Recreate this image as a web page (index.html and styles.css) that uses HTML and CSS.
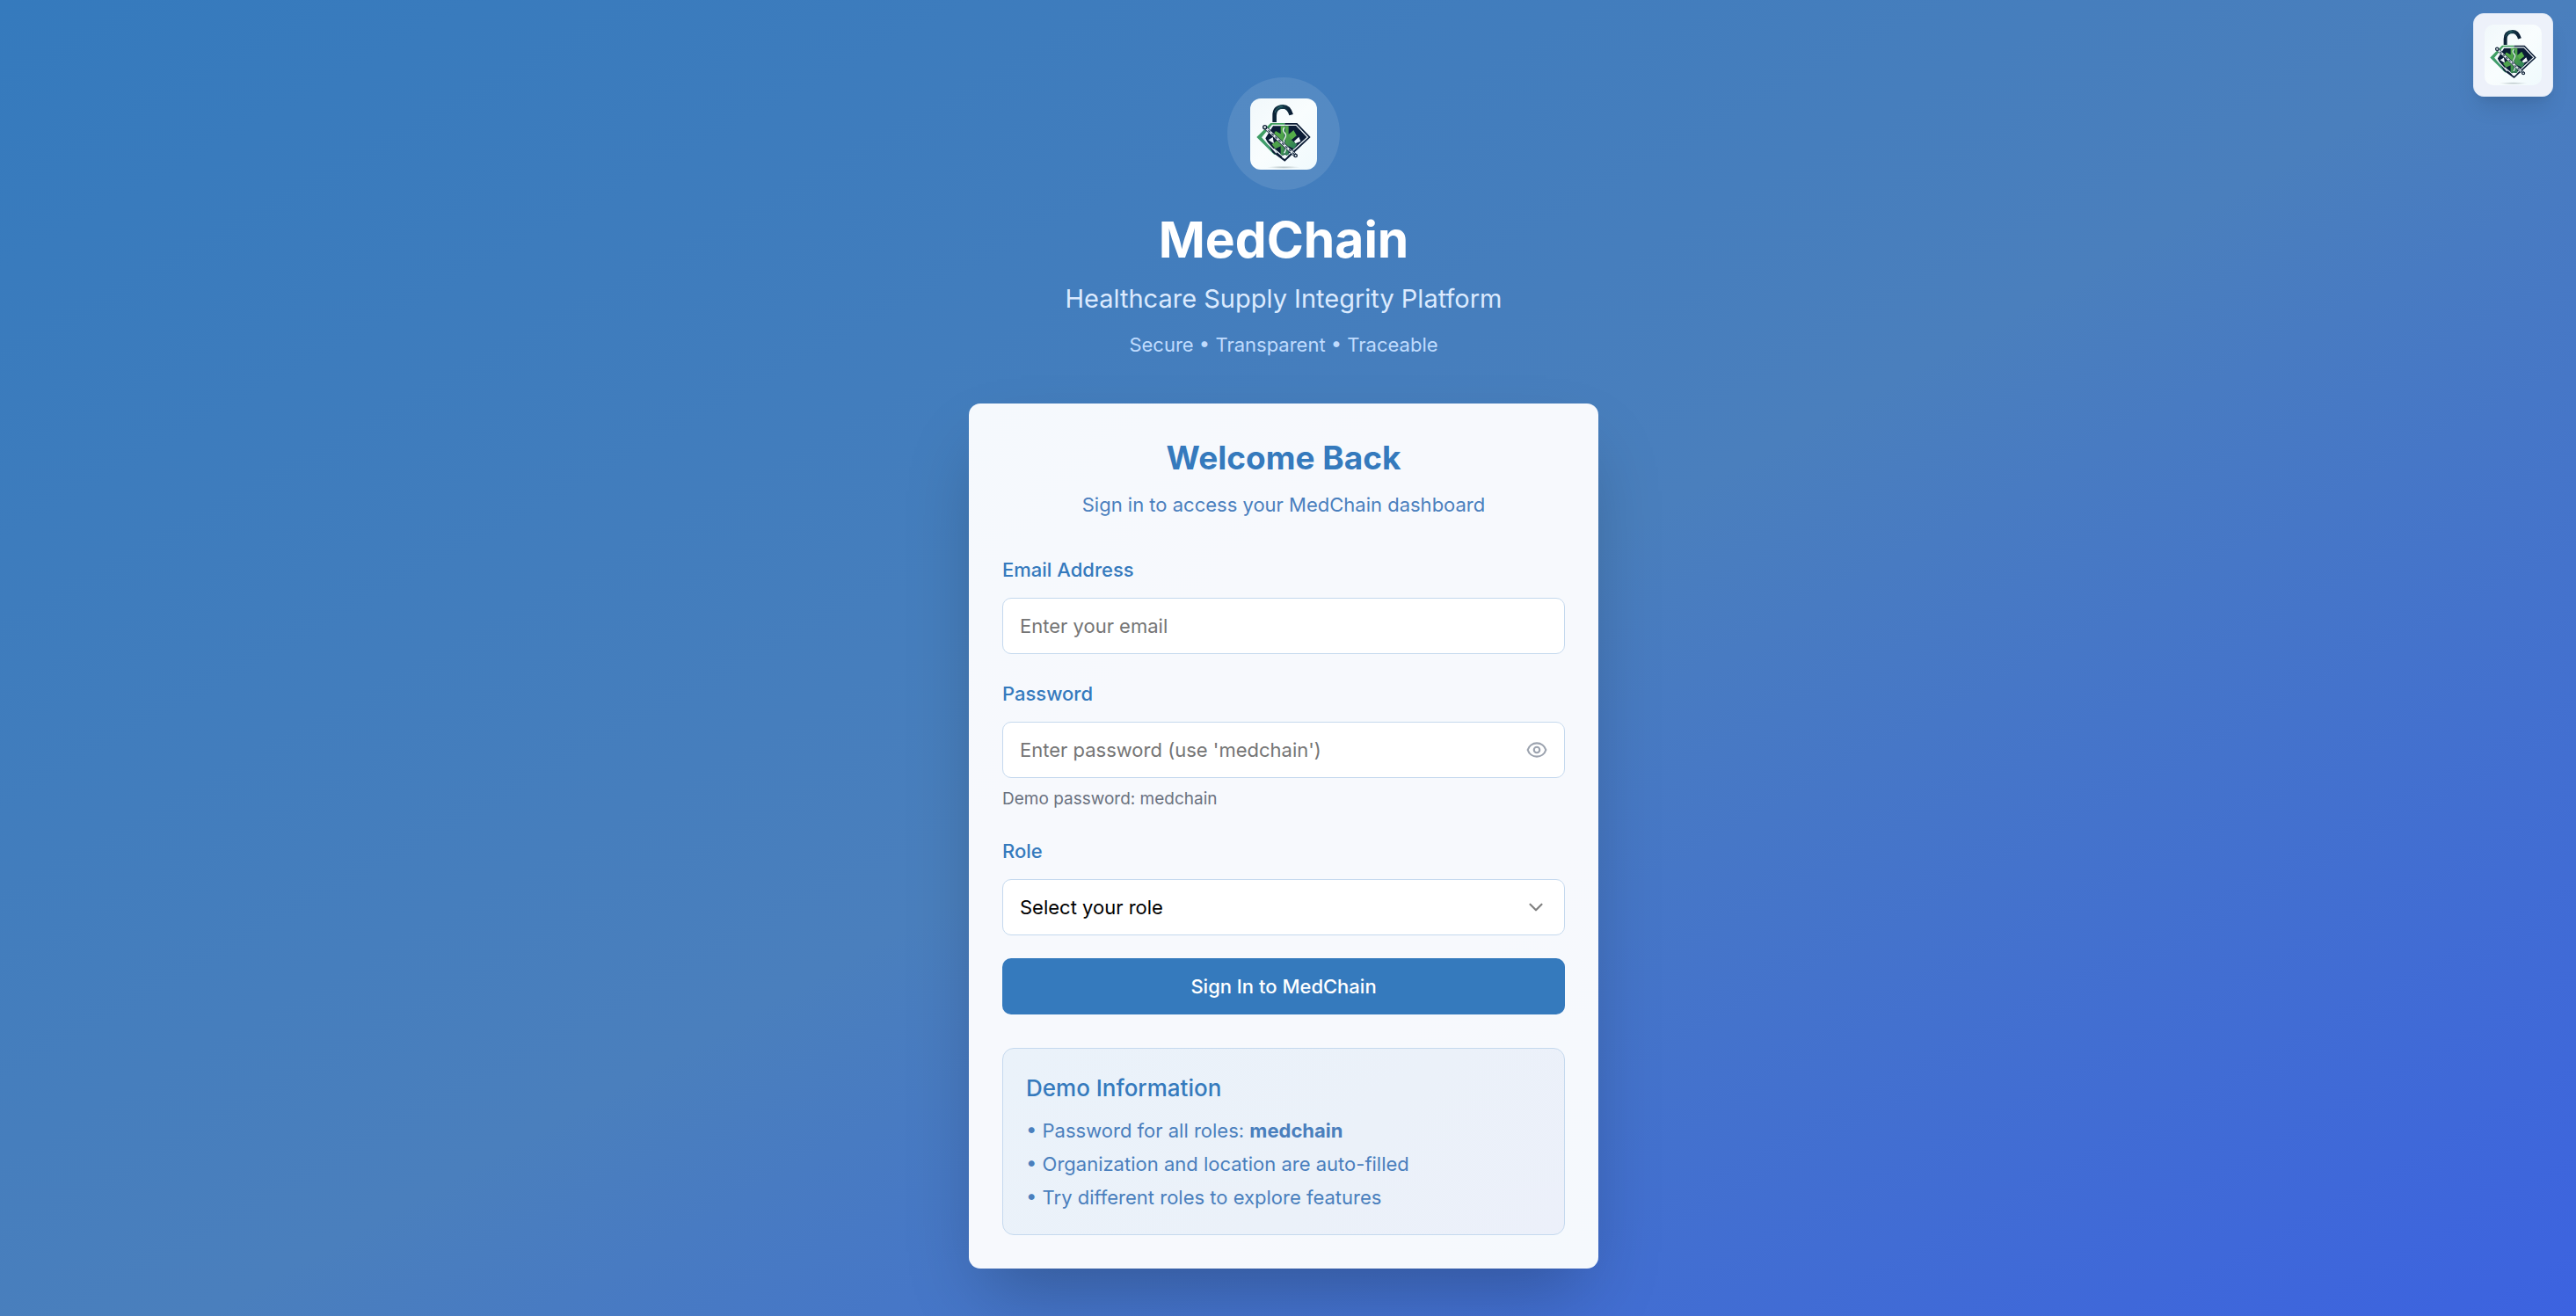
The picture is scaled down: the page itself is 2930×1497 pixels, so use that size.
FILE: index.html
```html
<!DOCTYPE html>
<html lang="en">
<head>
<meta charset="utf-8">
<meta name="viewport" content="width=device-width, initial-scale=1">
<title>MedChain</title>
<link rel="stylesheet" href="styles.css">
</head>
<body>
<svg class="defs" width="0" height="0" aria-hidden="true">
  <defs>
    <linearGradient id="tile" x1="0" y1="0" x2="1" y2="1"><stop offset="0" stop-color="#f1f8fb"/><stop offset=".5" stop-color="#f9fdfe"/><stop offset="1" stop-color="#f0fafd"/></linearGradient>
    <linearGradient id="shackle" x1="0" y1="0" x2="1" y2="0"><stop offset="0" stop-color="#0c2236"/><stop offset=".35" stop-color="#17424f"/><stop offset="1" stop-color="#0a1c33"/></linearGradient>
    <linearGradient id="leaf" x1="0" y1="0" x2="1" y2="1"><stop offset="0" stop-color="#5cb947"/><stop offset=".55" stop-color="#48994c"/><stop offset="1" stop-color="#1d6f60"/></linearGradient>
    <linearGradient id="edge" x1="0" y1="0" x2="0" y2="1"><stop offset="0" stop-color="#3f9f5c"/><stop offset="1" stop-color="#3f9a72"/></linearGradient>
    <radialGradient id="ground"><stop offset="0" stop-color="#b9c4c6"/><stop offset="1" stop-color="#b9c4c6" stop-opacity="0"/></radialGradient>
    <symbol id="logo" viewBox="0 0 228 243" preserveAspectRatio="none">
      <rect width="228" height="243" fill="url(#tile)"/>
      <ellipse cx="114" cy="235" rx="56" ry="5" fill="url(#ground)"/>
      <path d="M83 81V58q0-29 29-30 20 0 28 28" fill="none" stroke="url(#shackle)" stroke-width="14"/>
      <path d="M84 48q6-19 27-21" fill="none" stroke="#2c6a6c" stroke-width="3"/>
      <path d="M70 84H118V92H74L40 133 88 190 82 192 22 132Z" fill="url(#edge)"/>
      <path d="M118 84H160L206 132 118 215 76 184 52 136 78 94H118Z" fill="#0b1c35"/>
      <path d="M118 91H157L196 132 118 203 80 172" fill="none" stroke="#edf5f8" stroke-width="4"/>
      <path d="M118 91H76L42 133 90 186" fill="none" stroke="#edf5f8" stroke-width="4"/>
      <path d="M62 142 77 132 81 154ZM150 146 166 131 172 146 154 154ZM108 200 117 188 128 197 118 207Z" fill="#f4f9fb"/>
      <path d="M104 94H131V122L148 109 158 127 140 141 160 157 149 172 131 163V193H104V163L86 172 74 157 94 142 76 128 87 111 104 121Z" fill="url(#leaf)"/>
      <path d="M131 125 148 109 158 127 140 141Z" fill="#55ad49"/>
      <path d="M118 98V192" stroke="#1a5149" stroke-width="4"/>
      <path d="M117 99q-8 10 0 18t2 17-3 18 5 15-5 20" fill="none" stroke="#eff7f8" stroke-width="4"/>
      <g fill="none" stroke-linecap="round">
        <path d="M51 99 154 194" stroke="#102038" stroke-width="12"/>
        <path d="M51 99 154 194" stroke="#e9f1f3" stroke-width="8"/>
        <path d="M51 99 154 194" stroke="#22384c" stroke-width="4" stroke-dasharray="6 10"/>
      </g>
      <circle cx="50" cy="98" r="6" fill="#dfe9eb" stroke="#14243b" stroke-width="4"/>
      <circle cx="155" cy="195" r="5" fill="#dfe9eb" stroke="#14243b" stroke-width="4"/>
    </symbol>
  </defs>
</svg>

<aside class="badge"><svg class="badge-logo" role="img" aria-label="MedChain logo"><use href="#logo"/></svg></aside>

<main class="page">
  <header class="brand">
    <div class="halo"><svg class="brand-logo" role="img" aria-label="MedChain logo"><use href="#logo"/></svg></div>
    <h1 class="brand-name">MedChain</h1>
    <p class="tagline">Healthcare Supply Integrity Platform</p>
    <p class="values">Secure • Transparent • Traceable</p>
  </header>

  <section class="card">
    <div class="card-head">
      <h2 class="card-title">Welcome Back</h2>
      <p class="card-sub">Sign in to access your MedChain dashboard</p>
    </div>
    <form class="form">
      <div class="field">
        <label class="label" for="email">Email Address</label>
        <input class="control" id="email" type="email" placeholder="Enter your email">
      </div>
      <div class="field">
        <label class="label" for="password">Password</label>
        <div class="control-wrap">
          <input class="control" id="password" type="password" placeholder="Enter password (use 'medchain')">
          <button class="reveal" type="button" aria-label="Show password">
            <svg class="eye" viewBox="0 0 24 24" fill="none" stroke="currentColor" stroke-width="2" stroke-linecap="round" stroke-linejoin="round"><path d="M15 12a3 3 0 11-6 0 3 3 0 016 0z"/><path d="M2.458 12C3.732 7.943 7.523 5 12 5c4.478 0 8.268 2.943 9.542 7-1.274 4.057-5.064 7-9.542 7-4.477 0-8.268-2.943-9.542-7z"/></svg>
          </button>
        </div>
        <p class="hint">Demo password: medchain</p>
      </div>
      <div class="field">
        <label class="label" for="role">Role</label>
        <div class="control-wrap">
          <select class="control select" id="role"><option>Select your role</option></select>
          <svg class="chevron" viewBox="0 0 24 24" fill="none" stroke="currentColor" stroke-width="2" stroke-linecap="round" stroke-linejoin="round" aria-hidden="true"><path d="m6 9 6 6 6-6"/></svg>
        </div>
      </div>
      <button class="submit" type="submit">Sign In to MedChain</button>
    </form>
    <div class="info">
      <h3 class="info-title">Demo Information</h3>
      <ul class="info-list">
        <li>• Password for all roles: <strong>medchain</strong></li>
        <li>• Organization and location are auto-filled</li>
        <li>• Try different roles to explore features</li>
      </ul>
    </div>
  </section>
</main>
</body>
</html>
```

FILE: styles.css
```css
* { box-sizing: border-box; margin: 0; padding: 0; }

body {
  min-height: 100vh;
  font-family: Inter, "Liberation Sans", sans-serif;
  font-size: 22px;
  line-height: 32px;
  background: linear-gradient(151deg, #357abd 0%, #4a7fbd 52%, #3b60e3 104%);
}

.defs { position: absolute; }

.page {
  display: flex;
  flex-direction: column;
  align-items: center;
  gap: 51px;
  padding: 88px 36px 51px 26px;
}

/* floating logo badge */
.badge {
  position: absolute;
  top: 15px;
  right: 26px;
  padding: 12px;
  border: 1px solid #dfe8f6;
  border-radius: 12px;
  background: #edf1fa;
  box-shadow: 0 16px 24px -5px rgb(0 0 0 / .1), 0 6px 10px -6px rgb(0 0 0 / .1);
}
.badge-logo { display: block; width: 65px; height: 69px; border-radius: 10px; }

.brand { display: flex; flex-direction: column; align-items: center; text-align: center; }
.halo {
  display: grid;
  place-items: center;
  width: 128px;
  height: 128px;
  margin-bottom: 25px;
  border-radius: 50%;
  background: rgb(255 255 255 / .1);
}
.brand-logo { width: 76px; height: 81px; border-radius: 12px; }
.brand-name { margin-bottom: 12px; font-size: 57px; line-height: 64px; font-weight: 700; color: #fff; }
.tagline { margin-bottom: 14px; font-size: 29px; line-height: 45px; color: #dbeafe; }
.values { color: #bfdbfe; }

.card {
  width: 100%;
  max-width: 716px;
  padding: 38px;
  border-radius: 13px;
  background: linear-gradient(135deg, #f5f9fd, #f7f9fd 30%, #f7f9fd 70%, #f5f9fd);
  box-shadow: 0 40px 80px -19px rgb(0 0 0 / .25);
}
.card-head { margin-bottom: 36px; text-align: center; }
.card-title { margin-bottom: 10px; font-size: 37px; line-height: 48px; font-weight: 700; color: #357abd; }
.card-sub { line-height: 38px; color: #4a7fbd; }

.form { display: flex; flex-direction: column; gap: 26px; }
.field { display: flex; flex-direction: column; }
.label { margin-bottom: 13px; line-height: 38px; font-weight: 500; color: #357abd; }
.control-wrap { display: grid; position: relative; }
.control {
  width: 100%;
  height: 64px;
  padding: 0 19px;
  border: 1px solid #c5d9ee;
  border-radius: 10px;
  background: #fff;
  font: inherit;
  color: #000;
}
.control::placeholder { color: #757575; opacity: 1; }
.select { appearance: none; }
.reveal {
  position: absolute;
  right: 19px;
  top: 19px;
  width: 26px;
  height: 26px;
  border: 0;
  background: none;
  color: #9ca3af;
}
.eye { display: block; width: 26px; height: 26px; }
.chevron { position: absolute; right: 20px; top: 19px; width: 26px; height: 26px; color: #808080; pointer-events: none; }
.hint { margin-top: 10px; font-size: 19px; line-height: 28px; color: #6b7280; }
.submit {
  height: 64px;
  border: 0;
  border-radius: 10px;
  background: #357abd;
  font: inherit;
  font-weight: 500;
  color: #fff;
}

.info {
  margin-top: 38px;
  padding: 26px;
  border: 1px solid #c5d9ee;
  border-radius: 13px;
  background: linear-gradient(135deg, #eaf2fa, #ebf1f9 60%, #ecf0fa);
}
.info-title { margin-bottom: 13px; font-size: 26px; line-height: 38px; font-weight: 500; color: #357abd; }
.info-list { display: grid; gap: 6px; list-style: none; color: #4a7fbd; }
```
